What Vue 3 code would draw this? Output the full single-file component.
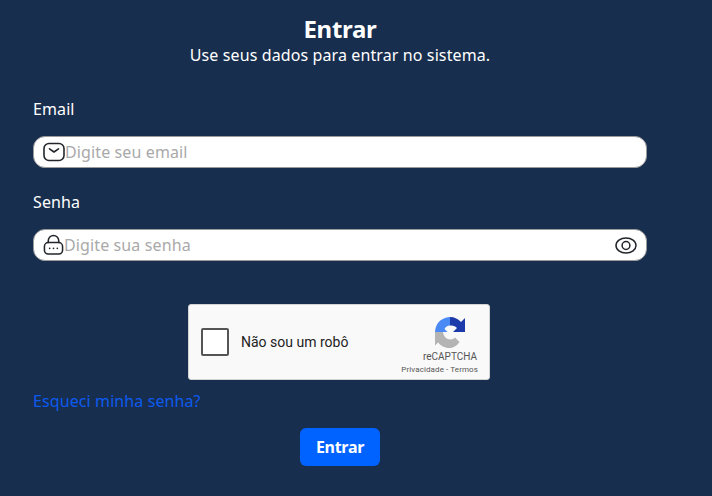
<script setup>
const title = 'Entrar'
</script>

<template>
  <main class="page">
    <form class="form" @submit.prevent>
      <header class="head">
        <h1>{{ title }}</h1>
        <p>Use seus dados para entrar no sistema.</p>
      </header>

      <label class="label first" for="email">Email</label>
      <div class="field">
        <svg class="ico" viewBox="0 0 22 20" width="22" height="20" fill="none" stroke="#22262b" stroke-width="1.6" stroke-linecap="round" stroke-linejoin="round">
          <rect x="1" y="1.5" width="20" height="17" rx="5" />
          <path d="M6.5 6.8 11 10l4.500-3.200" />
        </svg>
        <input id="email" type="text" placeholder="Digite seu email" />
      </div>

      <label class="label second" for="senha">Senha</label>
      <div class="field">
        <svg class="ico lock" viewBox="0 0 22 22" width="21" height="21" fill="none" stroke="#22262b" stroke-width="1.6" stroke-linecap="round" stroke-linejoin="round">
          <path d="M5.5 9V7a5.500 5.500 0 0 1 11 0v2" />
          <rect x="1.5" y="9" width="19" height="12" rx="4" />
          <path d="M7 15h.01M11 15h.01M15 15h.01" stroke-width="1.8" />
        </svg>
        <input id="senha" type="text" placeholder="Digite sua senha" />
        <svg class="eye" viewBox="0 0 22 17" width="22" height="17" fill="none" stroke="#22262b" stroke-width="1.5">
          <ellipse cx="11" cy="8.500" rx="10" ry="7.500" />
          <circle cx="11" cy="8.500" r="3.900" />
        </svg>
      </div>

      <div class="captcha-row">
        <div class="captcha">
          <span class="box"></span>
          <span class="robot">Não sou um robô</span>
          <div class="brand">
            <svg class="logo" viewBox="0 0 32 32" width="32" height="32">
              <path fill="#b4b4b4" d="M1 16H9C9.500 20.500 12.500 23.500 16.500 23.500C18.500 23.500 20 22.800 21 21.500L25.500 26C23 29.500 19.500 32 15.500 32C10.500 32 6.500 29.500 4 26.500L1 29.500Z" />
              <path fill="#4a8af4" d="M1 16C1.500 10 4 5.500 8 3.500C10.500 2 13 1 16 1V9.500C13.500 9.500 11.500 11 10.500 13L13.500 16Z" />
              <path fill="#1c3aa9" d="M16 1C20.500 1 24.500 3 27 6L31 2V16H19L23 12C21.500 10.300 19 9 16 9.500Z" />
            </svg>
            <span class="rc">reCAPTCHA</span>
            <span class="terms">Privacidade - Termos</span>
          </div>
        </div>
      </div>

      <a class="forgot" href="#">Esqueci minha senha?</a>

      <div class="actions">
        <button type="submit">Entrar</button>
      </div>
    </form>
  </main>
</template>

<style>
html, body { margin: 0; background: #182e4e; }
</style>

<style scoped>
.page {
  width: 712px;
  height: 496px;
  box-sizing: border-box;
  padding: 14px 65px 0 33px;
  background: #182e4e;
  color: #fff;
  font-family: "Noto Sans", sans-serif;
  overflow: hidden;
}
.form { display: flex; flex-direction: column; }
.head { text-align: center; }
.head h1 { margin: 0; font-size: 24px; line-height: 30px; font-weight: 700; letter-spacing: -0.3px; }
.head p { margin: 0; font-size: 16px; line-height: 22px; letter-spacing: 0.11px; }
.label { font-size: 16px; line-height: 22px; letter-spacing: 0.1px; }
.label.first { margin-top: 32px; }
.label.second { margin-top: 23px; }
.field {
  margin-top: 16px;
  height: 32px;
  box-sizing: border-box;
  display: flex;
  align-items: center;
  background: #fff;
  border: 1px solid #9a9a9a;
  border-radius: 12px;
  padding: 0 9px 0 9px;
}
.ico { flex: none; }
.lock { margin-top: -2px; }
input {
  flex: 1;
  min-width: 0;
  border: 0;
  outline: 0;
  padding: 0;
  background: transparent;
  font: 16px "Noto Sans", sans-serif;
  letter-spacing: 0.12px;
  color: #222;
}
input::placeholder { color: #a9a9a9; opacity: 1; }
.eye { flex: none; }
.captcha-row { display: flex; margin: 43px 0 0 155px; }
.captcha {
  width: 302px;
  height: 76px;
  box-sizing: border-box;
  display: flex;
  align-items: center;
  background: #f9f9f9;
  border: 1px solid #d3d3d3;
  border-radius: 3px;
  padding-left: 12px;
  color: #222;
  font-family: Roboto, sans-serif;
}
.box {
  width: 28px;
  height: 28px;
  box-sizing: border-box;
  background: #fff;
  border: 2px solid #555;
  border-radius: 2px;
  flex: none;
}
.robot { margin-left: 12px; font-size: 14px; flex: 1; }
.brand {
  align-self: flex-start;
  padding: 11px 11px 0 0;
  display: flex;
  flex-direction: column;
  align-items: flex-end;
  color: #555;
}
.logo { margin-right: 12px; }
.rc { font-size: 10px; line-height: 12px; margin-top: 3px; margin-right: 1px; }
.terms { font-size: 8px; line-height: 10px; margin-top: 2px; white-space: nowrap; letter-spacing: 0.1px; }
.forgot {
  margin-top: 9px;
  color: #0d5bee;
  font-size: 16px;
  line-height: 24px;
  letter-spacing: 0.1px;
  text-decoration: none;
  align-self: flex-start;
}
.actions { display: flex; justify-content: center; margin-top: 15px; }
button {
  width: 80px;
  height: 38px;
  border: 0;
  border-radius: 6px;
  background: #0062ff;
  color: #fff;
  font: 700 16px "Noto Sans", sans-serif;
  letter-spacing: -0.3px;
}
</style>
